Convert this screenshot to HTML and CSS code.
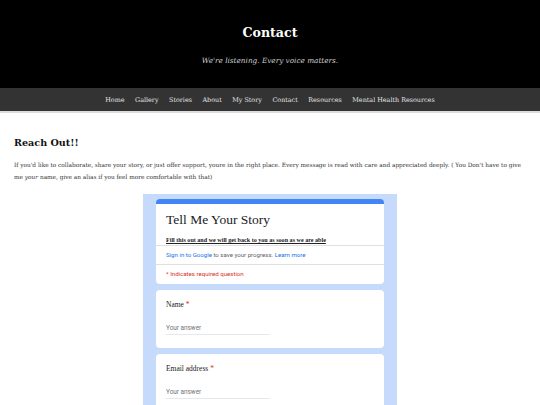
FILE: index.html
```html
<!DOCTYPE html>
<html>
<head>
<meta charset="utf-8">
<link rel="stylesheet" href="styles.css">
</head>
<body>
<header class="site-header">
  <h1 class="site-title">Contact</h1>
  <p class="site-tagline">We're listening. Every voice matters.</p>
</header>
<nav class="site-nav">
  <a href="#">Home</a>
  <a href="#">Gallery</a>
  <a href="#">Stories</a>
  <a href="#">About</a>
  <a href="#">My Story</a>
  <a href="#">Contact</a>
  <a href="#">Resources</a>
  <a href="#">Mental Health Resources</a>
</nav>
<main class="content">
  <h2 class="page-heading">Reach Out!!</h2>
  <p class="intro">If you'd like to collaborate, share your story, or just offer support, youre in the right place. Every message is read with care and appreciated deeply. ( You Don't have to give me <em>your</em> name, give an alias if you feel more comfortable with that)</p>
  <div class="form-frame">
    <div class="form-card form-head">
      <div class="head-main">
        <div class="form-title">Tell Me Your Story</div>
        <div class="form-desc">Fill this out and we will get back to you as soon as we are able</div>
      </div>
      <div class="head-row signin"><span class="link">Sign in to Google</span> to save your progress. <span class="link">Learn more</span></div>
      <div class="head-row required">* Indicates required question</div>
    </div>
    <div class="form-card question">
      <div class="q-label">Name <span class="star">*</span></div>
      <div class="q-input">Your answer</div>
    </div>
    <div class="form-card question">
      <div class="q-label">Email address <span class="star">*</span></div>
      <div class="q-input">Your answer</div>
    </div>
  </div>
</main>
</body>
</html>
```

FILE: styles.css
```css
html, body {
  margin: 0;
  padding: 0;
  background: #ffffff;
  overflow: hidden;
}
body {
  font-family: "DejaVu Serif", Georgia, serif;
  color: #222;
}
.site-header {
  background: #000;
  height: 88px;
  box-sizing: border-box;
  padding-top: 24px;
  text-align: center;
  color: #fff;
}
.site-title {
  margin: 0;
  font-size: 12.6px;
  font-weight: bold;
  line-height: 18px;
}
.site-tagline {
  margin: 14px 0 0;
  font-style: italic;
  font-size: 7.3px;
  line-height: 10px;
  color: #cfcfcf;
}
.site-nav {
  background: #333333;
  height: 23px;
  border-bottom: 2px solid #dddddd;
  display: flex;
  justify-content: center;
  align-items: center;
  gap: 10.5px;
}
.site-nav a {
  color: #e6e6e6;
  text-decoration: none;
  font-size: 6.4px;
}
.content {
  padding: 0 14px;
}
.page-heading {
  margin: 22px 0 0;
  font-size: 9.6px;
  line-height: 16px;
  font-weight: bold;
  color: #111;
}
.intro {
  margin: 8px 0 0;
  font-size: 5.8px;
  line-height: 12px;
  color: #333;
}
.form-frame {
  margin: 11px auto 0;
  width: 254px;
  background: #c6dafc;
  padding: 5px 13px 0;
  box-sizing: border-box;
  display: flex;
  flex-direction: column;
  gap: 6px;
  height: 220px;
}
.form-card {
  background: #fff;
  border-radius: 4px;
  font-family: Roboto, "Noto Sans", sans-serif;
}
.form-head {
  border-top: 5px solid #4285f4;
}
.head-main {
  padding: 7px 10px 1px;
  border-bottom: 1px solid #e0e0e0;
}
.form-title {
  font-family: "Liberation Serif", "Times New Roman", serif;
  font-size: 13.5px;
  line-height: 17px;
  color: #202124;
}
.form-desc {
  font-family: "Liberation Serif", serif;
  font-size: 6.1px;
  font-weight: bold;
  text-decoration: underline;
  color: #202124;
  margin-top: 8px;
  line-height: 8px;
}
.head-row {
  padding: 0 10px;
  font-size: 6.1px;
  line-height: 18px;
}
.signin {
  color: #5f6368;
  border-bottom: 1px solid #e0e0e0;
}
.signin .link {
  color: #1a73e8;
}
.required {
  color: #d93025;
  padding-bottom: 1px;
}
.question {
  height: 58px;
  padding: 10px 10px 0;
  box-sizing: border-box;
  flex: none;
}
.q-label {
  font-family: "Liberation Serif", serif;
  font-size: 7.5px;
  color: #202124;
  line-height: 10px;
}
.star {
  color: #d93025;
}
.q-input {
  margin-top: 13px;
  width: 104px;
  font-size: 6.4px;
  color: #70757a;
  line-height: 10px;
  padding-bottom: 1px;
  border-bottom: 1px solid #e8e8e8;
}
```
